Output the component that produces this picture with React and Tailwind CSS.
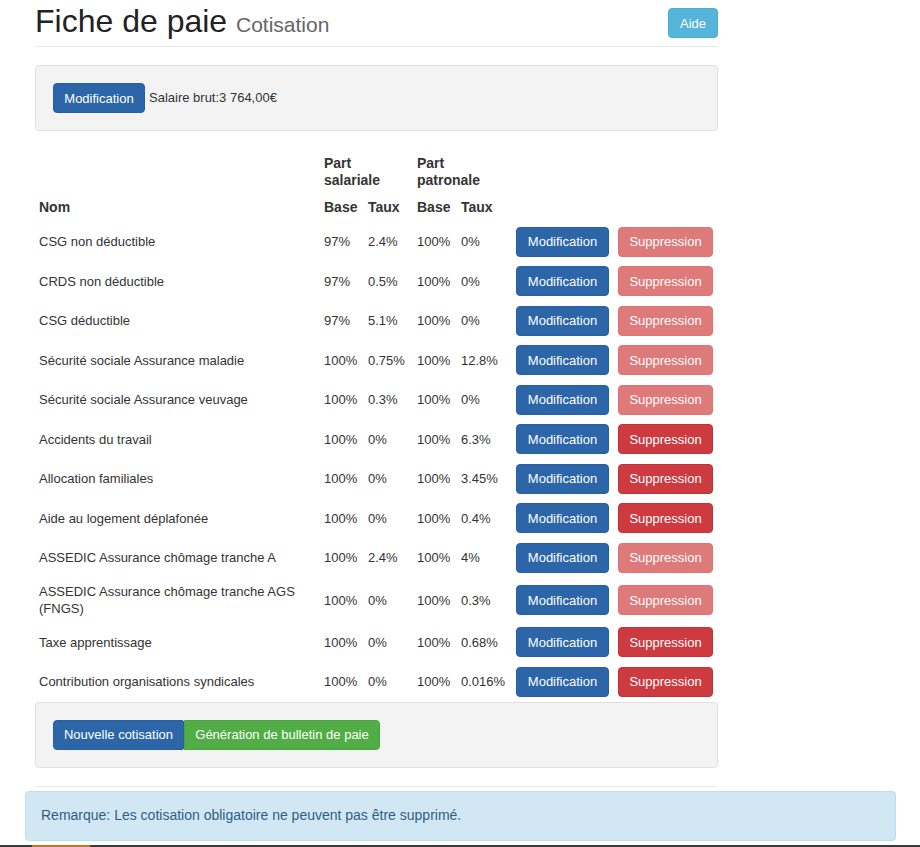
const rows = [
  { nom: 'CSG non déductible', sb: '97%', st: '2.4%', pb: '100%', pt: '0%', locked: true },
  { nom: 'CRDS non déductible', sb: '97%', st: '0.5%', pb: '100%', pt: '0%', locked: true },
  { nom: 'CSG déductible', sb: '97%', st: '5.1%', pb: '100%', pt: '0%', locked: true },
  { nom: 'Sécurité sociale Assurance maladie', sb: '100%', st: '0.75%', pb: '100%', pt: '12.8%', locked: true },
  { nom: 'Sécurité sociale Assurance veuvage', sb: '100%', st: '0.3%', pb: '100%', pt: '0%', locked: true },
  { nom: 'Accidents du travail', sb: '100%', st: '0%', pb: '100%', pt: '6.3%', locked: false },
  { nom: 'Allocation familiales', sb: '100%', st: '0%', pb: '100%', pt: '3.45%', locked: false },
  { nom: 'Aide au logement déplafonée', sb: '100%', st: '0%', pb: '100%', pt: '0.4%', locked: false },
  { nom: 'ASSEDIC Assurance chômage tranche A', sb: '100%', st: '2.4%', pb: '100%', pt: '4%', locked: true },
  { nom: 'ASSEDIC Assurance chômage tranche AGS (FNGS)', sb: '100%', st: '0%', pb: '100%', pt: '0.3%', locked: true },
  { nom: 'Taxe apprentissage', sb: '100%', st: '0%', pb: '100%', pt: '0.68%', locked: false },
  { nom: 'Contribution organisations syndicales', sb: '100%', st: '0%', pb: '100%', pt: '0.016%', locked: false },
];

const btn = 'inline-flex h-[30px] items-center justify-center rounded-[4px] border text-[13px] leading-none text-white';

export default function App() {
  return (
    <div className="w-[920px] bg-white font-['Liberation_Sans',Arial,sans-serif] text-[13px] text-[#333]">
      <div className="ml-[35px] w-[683px]">
        {/* header */}
        <div className="flex h-[47px] items-start justify-between border-b border-[#e8e8e8]">
          <h1 className="mt-[4px] text-[32px] leading-[35px] font-normal text-[#222]">
            Fiche de paie <span className="text-[21px] text-[#666]">Cotisation</span>
          </h1>
          <button className={`${btn} mt-[8px] w-[50px] border-[#46b0d6] bg-[#54b4da]`}>Aide</button>
        </div>

        <div className="mt-[18px] flex items-center rounded-[4px] border border-[#e0e0e0] bg-[#f3f3f3] px-[17px] py-[17px]">
          <button className={`${btn} w-[92px] border-[#275f9f] bg-[#2c66a9]`}>Modification</button>
          <span className="ml-[4px]">Salaire brut:3 764,00€</span>
        </div>

        <table className="mt-[19px] w-[683px] table-fixed border-collapse">
          <colgroup>
            <col className="w-[284px]" />
            <col className="w-[44px]" />
            <col className="w-[49px]" />
            <col className="w-[44px]" />
            <col className="w-[55px]" />
            <col className="w-[102px]" />
            <col className="w-[105px]" />
          </colgroup>
          <thead className="text-[14px] font-bold">
            <tr>
              <th />
              <th colSpan={2} className="px-[5px] py-[5px] text-left align-bottom leading-[17px]">Part<br />salariale</th>
              <th colSpan={2} className="px-[5px] py-[5px] text-left align-bottom leading-[17px]">Part<br />patronale</th>
              <th />
              <th />
            </tr>
            <tr className="text-left leading-[17px]">
              <th className="px-[4px] pt-[5px] pb-[6px]">Nom</th>
              <th className="px-[5px] pt-[5px] pb-[6px]">Base</th>
              <th className="px-[5px] pt-[5px] pb-[6px]">Taux</th>
              <th className="px-[5px] pt-[5px] pb-[6px]">Base</th>
              <th className="px-[5px] pt-[5px] pb-[6px]">Taux</th>
              <th />
              <th />
            </tr>
          </thead>
          <tbody>
            {rows.map(r => (
              <tr key={r.nom} className="leading-[17px]">
                <td className="py-[5.5px] pr-[14px] pl-[4px] align-middle">{r.nom}</td>
                <td className="px-[5px] align-middle">{r.sb}</td>
                <td className="px-[5px] align-middle">{r.st}</td>
                <td className="px-[5px] align-middle">{r.pb}</td>
                <td className="px-[5px] align-middle">{r.pt}</td>
                <td className="py-[4.75px] pl-[5px] align-middle">
                  <button className={`${btn} w-[93px] border-[#275f9f] bg-[#2c66a9]`}>Modification</button>
                </td>
                <td className="py-[4.75px] pl-[5px] align-middle">
                  <button className={`${btn} w-[95px] ${r.locked ? 'border-[#dd7373] bg-[#df7a7a]' : 'border-[#c13338] bg-[#cd3a3f]'}`}>
                    Suppression
                  </button>
                </td>
              </tr>
            ))}
          </tbody>
        </table>

        <div className="flex items-center rounded-[4px] border border-[#e0e0e0] bg-[#f3f3f3] px-[17px] py-[17px]">
          <button className={`${btn} w-[131px] rounded-r-[2px] border-[#275f9f] bg-[#2c66a9]`}>Nouvelle cotisation</button>
          <button className={`${btn} w-[196px] rounded-l-none border-[#4aa53e] bg-[#52ad46]`}>Génération de bulletin de paie</button>
        </div>

        <div className="mt-[18px] h-px bg-[#e8e8e8]" />
      </div>

      <div className="mt-[4px] ml-[25px] flex h-[50px] w-[871px] items-center rounded-[4px] border border-[#b9dff0] bg-[#d2e7f4] px-[15px] text-[14px] text-[#2f5f86]">
        Remarque: Les cotisation obligatoire ne peuvent pas être supprimé.
      </div>

      <div className="mt-[4px] flex h-[2px] bg-[#3a3a3a]">
        <div className="ml-[32px] w-[58px] bg-[#b8792a]" />
      </div>
    </div>
  );
}
